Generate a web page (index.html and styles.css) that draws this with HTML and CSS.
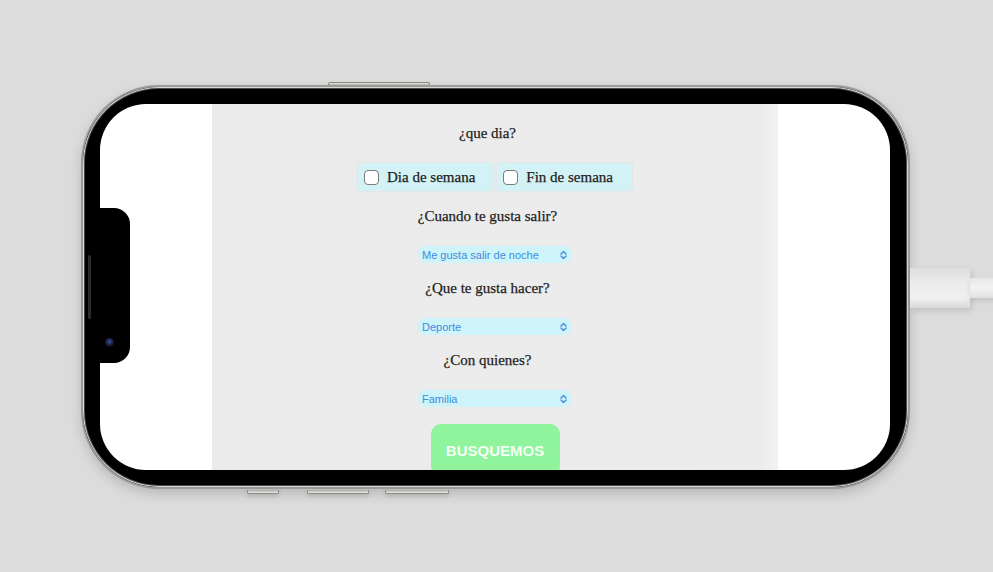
FILE: index.html
```html
<!DOCTYPE html>
<html lang="es">
<head>
<meta charset="utf-8">
<title>Busquemos</title>
<link rel="stylesheet" href="styles.css">
</head>
<body>
<div class="stage">
  <div class="phone">
    <span class="btn-top"></span>
    <span class="btn-bottom b1"></span>
    <span class="btn-bottom b2"></span>
    <span class="btn-bottom b3"></span>
    <span class="speaker"></span>
    <span class="cable-plug"></span>
    <span class="cable"></span>
    <div class="screen">
      <div class="notch"><span class="camera"></span></div>
      <div class="page">
        <p class="q q-first">¿que dia?</p>
        <div class="checks">
          <label class="check"><input type="checkbox"><span>Dia de semana</span></label>
          <label class="check"><input type="checkbox"><span>Fin de semana</span></label>
        </div>
        <p class="q">¿Cuando te gusta salir?</p>
        <div class="select"><span>Me gusta salir de noche</span><svg width="7" height="10" viewBox="0 0 7 10"><path d="M1 4 L3.5 1.5 L6 4 M1 6 L3.5 8.5 L6 6" fill="none" stroke="#3d8de0" stroke-width="1.4" stroke-linecap="round" stroke-linejoin="round"/></svg></div>
        <p class="q">¿Que te gusta hacer?</p>
        <div class="select"><span>Deporte</span><svg width="7" height="10" viewBox="0 0 7 10"><path d="M1 4 L3.5 1.5 L6 4 M1 6 L3.5 8.5 L6 6" fill="none" stroke="#3d8de0" stroke-width="1.4" stroke-linecap="round" stroke-linejoin="round"/></svg></div>
        <p class="q">¿Con quienes?</p>
        <div class="select"><span>Familia</span><svg width="7" height="10" viewBox="0 0 7 10"><path d="M1 4 L3.5 1.5 L6 4 M1 6 L3.5 8.5 L6 6" fill="none" stroke="#3d8de0" stroke-width="1.4" stroke-linecap="round" stroke-linejoin="round"/></svg></div>
        <button class="go">BUSQUEMOS</button>
      </div>
    </div>
  </div>
</div>
</body>
</html>
```
FILE: styles.css
```css
html, body {
  margin: 0;
  padding: 0;
}
body {
  background: #dcdcdc;
  width: 993px;
  height: 572px;
  overflow: hidden;
}
.stage {
  padding: 85px 0 0 81px;
}
.phone {
  position: relative;
  box-sizing: border-box;
  width: 829px;
  height: 404px;
  background: #000;
  border: 2px solid #9a9a96;
  border-radius: 78px;
  padding: 17px 18px 17px 17px;
  box-shadow: inset 0 0 0 1px #d6d6d2, inset 0 0 0 2px #4a4a4a, 0 5px 12px rgba(0,0,0,0.16);
}
.btn-top {
  position: absolute;
  left: 245px;
  top: -5px;
  width: 100px;
  height: 2px;
  background: linear-gradient(#e6e6e3, #b0b0ac);
  border: 1px solid #8a8a86;
  border-bottom: none;
  border-radius: 2px 2px 0 0;
}
.btn-bottom {
  position: absolute;
  bottom: -7px;
  height: 3px;
  background: linear-gradient(#a8a8a4, #ececea);
  border: 1px solid #8a8a86;
  border-top: none;
  border-radius: 0 0 2px 2px;
  box-shadow: 0 2px 4px rgba(0,0,0,0.15);
}
.b1 { left: 164px; width: 30px; }
.b2 { left: 224px; width: 60px; }
.b3 { left: 302px; width: 62px; }
.speaker {
  position: absolute;
  left: 5px;
  top: 168px;
  width: 3px;
  height: 64px;
  border-radius: 2px;
  background: #2c2c2c;
}
.cable-plug {
  position: absolute;
  left: 827px;
  top: 181px;
  width: 60px;
  height: 40px;
  background: linear-gradient(#dedede 0%, #ececec 40%, #f0f0f0 75%, #d8d8d8 100%);
  box-shadow: 2px 3px 6px rgba(0,0,0,0.12);
}
.cable {
  position: absolute;
  left: 887px;
  top: 191px;
  width: 30px;
  height: 20px;
  background: linear-gradient(#e6e6e6, #f3f3f3 50%, #e0e0e0);
  box-shadow: 0 3px 5px rgba(0,0,0,0.1);
}
.screen {
  position: relative;
  width: 100%;
  height: 100%;
  background: #fff;
  border-radius: 46px;
  overflow: hidden;
  display: flex;
  justify-content: center;
}
.notch {
  position: absolute;
  left: 0;
  top: 104px;
  width: 30px;
  height: 155px;
  background: #000;
  border-radius: 0 16px 16px 0;
}
.camera {
  position: absolute;
  left: 5px;
  top: 130px;
  width: 9px;
  height: 9px;
  border-radius: 50%;
  background: radial-gradient(circle at 50% 40%, #3a4fa8 0, #1b2240 45%, #0b0b10 75%);
}
.page {
  width: 566px;
  height: 100%;
  flex-shrink: 0;
  background: linear-gradient(to right, #ebebeb 0, #ececec 97%, #f3f3f3 100%);
  display: flex;
  flex-direction: column;
  align-items: center;
  padding-top: 19px;
  box-sizing: border-box;
}
.page > * {
  flex-shrink: 0;
}
.q {
  margin: 0 0 20px;
  padding-right: 15px;
  font-family: "Liberation Serif", "Times New Roman", serif;
  font-size: 15px;
  line-height: 20px;
  color: #1e1e1e;
  -webkit-text-stroke: 0.25px #1e1e1e;
}
.checks {
  display: flex;
  gap: 4px;
  margin-bottom: 15px;
}
.check {
  display: flex;
  align-items: center;
  height: 28px;
  background: #d3f2f5;
  border-radius: 3px;
  padding: 0 18px 0 6px;
  box-shadow: 0 0 3px rgba(0,0,0,0.07);
  font-family: "Liberation Serif", "Times New Roman", serif;
  font-size: 15px;
  color: #1e1e1e;
  -webkit-text-stroke: 0.25px #1e1e1e;
}
.check + .check {
  padding-right: 19px;
}
.check input {
  appearance: none;
  -webkit-appearance: none;
  margin: 0 8px 0 0;
  width: 15px;
  height: 15px;
  box-sizing: border-box;
  border: 1.5px solid #7b7b7b;
  border-radius: 4px;
  background: #fff;
}
.select {
  box-sizing: border-box;
  width: 154px;
  height: 17px;
  margin-bottom: 15px;
  background: #cef3f9;
  border-radius: 8px;
  padding: 0 5px 0 4px;
  display: flex;
  align-items: center;
  justify-content: space-between;
  font-family: "Liberation Sans", Arial, sans-serif;
  font-size: 11px;
  color: #3d8de0;
}
.select svg {
  display: block;
}
.go {
  margin-top: 2px;
  width: 129px;
  height: 52px;
  border: none;
  border-radius: 10px;
  background: #8ff49b;
  color: #f4fff5;
  font-family: "Liberation Sans", Arial, sans-serif;
  font-weight: bold;
  font-size: 15px;
}
```
